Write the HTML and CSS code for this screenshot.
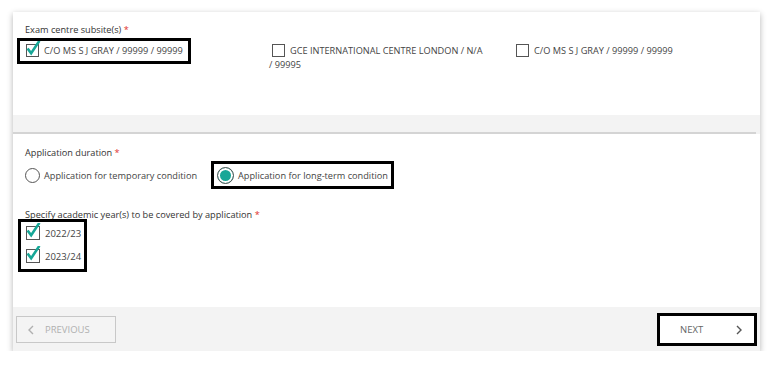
FILE: index.html
```html
<!DOCTYPE html>
<html lang="en">
<head>
    <meta charset="UTF-8">
    <meta name="viewport" content="width=device-width, initial-scale=1.0">
    <title>Access arrangements application</title>
    <link rel="stylesheet" href="styles.css">
</head>
<body>
    <div class="panel">
        <div class="section section-top">
            <div class="field-label">Exam centre subsite(s) <span class="req">*</span></div>
            <div class="subsites">
                <div class="col">
                    <label class="option marked">
                        <span class="box checked">
                            <svg viewBox="0 0 16 16"><polyline points="2.5,8.5 5.5,12.5 13.5,0.5"/></svg>
                        </span>C/O MS S J GRAY / 99999 / 99999
                    </label>
                </div>
                <div class="col">
                    <label class="option"><span class="box"></span>GCE INTERNATIONAL CENTRE LONDON / N/A /&nbsp;99995</label>
                </div>
                <div class="col">
                    <label class="option"><span class="box"></span>C/O MS S J GRAY / 99999 / 99999</label>
                </div>
            </div>
        </div>

        <div class="gap"></div>

        <div class="section section-main">
            <div class="field-label">Application duration <span class="req">*</span></div>
            <div class="radios">
                <label class="radio"><span class="dot"></span>Application for temporary condition</label>
                <label class="radio marked"><span class="dot on"></span>Application for long-term condition</label>
            </div>

            <div class="field-label years-label">Specify academic year(s) to be covered by application <span class="req">*</span></div>
            <div class="years marked">
                <label class="year">
                    <span class="box checked">
                        <svg viewBox="0 0 16 16"><polyline points="2.5,8.5 5.5,12.5 13.5,0.5"/></svg>
                    </span>2022/23
                </label>
                <label class="year">
                    <span class="box checked">
                        <svg viewBox="0 0 16 16"><polyline points="2.5,8.5 5.5,12.5 13.5,0.5"/></svg>
                    </span>2023/24
                </label>
            </div>
        </div>

        <div class="footer">
            <button class="nav prev">
                <svg class="chev" viewBox="0 0 6 10"><polyline points="5,1 1,5 5,9"/></svg>
                PREVIOUS
            </button>
            <button class="nav next marked">
                NEXT
                <svg class="chev" viewBox="0 0 6 10"><polyline points="1,1 5,5 1,9"/></svg>
            </button>
        </div>
    </div>
</body>
</html>
```

FILE: styles.css
```css
body {
    margin: 0;
    background: #fff;
    font-family: "Open Sans", "DejaVu Sans", sans-serif;
    font-size: 9.2px;
    color: #444;
}
.panel {
    margin: 12px 0 0 13px;
    width: 747px;
    background: #f3f3f3;
    box-shadow: 0 2px 6px rgba(0, 0, 0, 0.3);
}
.section {
    background: #fff;
    padding: 0 12px;
}
.section-top {
    height: 103px;
    padding-top: 12px;
    box-sizing: border-box;
}
.section-main {
    height: 173px;
    padding-top: 13px;
    box-sizing: border-box;
}
.gap {
    height: 17px;
    border-bottom: 2px solid #d4d4d4;
    margin-right: 4px;
}
.field-label {
    line-height: 12px;
    color: #333;
}
.req {
    color: #e0302b;
}
.marked {
    outline: 3px solid #000;
    outline-offset: 3px;
}

/* subsite checkboxes */
.subsites {
    display: grid;
    grid-template-columns: 246px 244px 1fr;
    margin: 8px 0 0 -2px;
}
.col {
    padding-right: 12px;
}
.option {
    display: block;
    line-height: 14px;
    text-transform: uppercase;
}
.option.marked {
    display: inline-block;
    padding-right: 2px;
}
.box {
    position: relative;
    display: inline-block;
    width: 11px;
    height: 11px;
    border: 1px solid #555;
    margin: 0 5px 0 3px;
    vertical-align: -3px;
    background: #fff;
}
.box svg {
    position: absolute;
    left: -1px;
    top: -4px;
    width: 15px;
    height: 16px;
    fill: none;
    stroke: #17a797;
    stroke-width: 2.8;
    stroke-linecap: square;
}

/* radios */
.radios {
    display: flex;
    gap: 20px;
    margin-top: 8px;
}
.radio {
    display: flex;
    align-items: center;
    height: 16px;
}
.dot {
    width: 15px;
    height: 15px;
    border: 1px solid #555;
    border-radius: 50%;
    margin-right: 4px;
    box-sizing: border-box;
    background: #fff;
}
.dot.on {
    width: 17px;
    height: 17px;
    background: #17a797;
    box-shadow: inset 0 0 0 2px #fff;
}

/* academic years */
.years-label {
    margin-top: 26px;
}
.years {
    width: 59px;
    margin: 3px 0 0 -2px;
    display: flex;
    flex-direction: column;
    gap: 3px;
    outline-offset: 2px;
}
.year {
    line-height: 20px;
    font-size: 9.5px;
}
.year .box {
    width: 12px;
    height: 12px;
    margin-right: 5px;
}

/* footer */
.footer {
    display: flex;
    justify-content: space-between;
    padding: 9px 6px 8px 3px;
}
.nav {
    display: flex;
    align-items: center;
    height: 27px;
    font-family: inherit;
    font-size: 9.5px;
    padding: 0;
    cursor: pointer;
}
.prev {
    width: 100px;
    border: 1px solid #c8c8c8;
    background: #f4f4f4;
    color: #b0b0b0;
    padding-left: 11px;
    gap: 11px;
}
.prev .chev {
    stroke: #b0b0b0;
}
.next {
    width: 94px;
    border: none;
    background: #fff;
    color: #666;
    outline-offset: 0;
    padding-left: 20px;
    gap: 33px;
}
.chev {
    width: 6px;
    height: 10px;
    fill: none;
    stroke: #555;
    stroke-width: 1.4;
}
```
